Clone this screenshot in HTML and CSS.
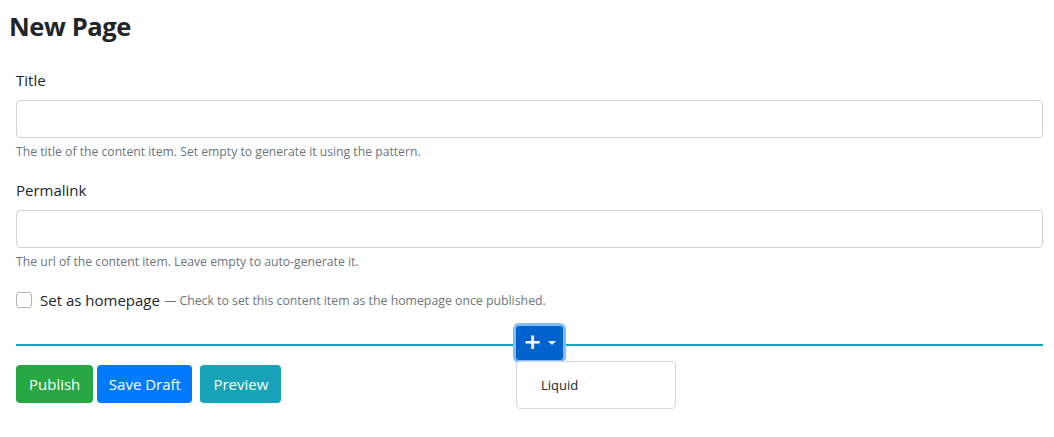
FILE: index.html
```html
<!DOCTYPE html>
<html>
<head>
<meta charset="utf-8">
<link rel="stylesheet" href="styles.css">
</head>
<body>
<h1 class="page-title">New Page</h1>
<form class="editor">
  <div class="field">
    <label class="field-label">Title</label>
    <input class="text-input" type="text">
    <div class="hint">The title of the content item. Set empty to generate it using the pattern.</div>
  </div>
  <div class="field">
    <label class="field-label">Permalink</label>
    <input class="text-input" type="text">
    <div class="hint">The url of the content item. Leave empty to auto-generate it.</div>
  </div>
  <div class="check-row">
    <span class="check-box"></span>
    <span class="check-label">Set as homepage</span>
    <span class="check-hint">— Check to set this content item as the homepage once published.</span>
  </div>
  <div class="divider">
    <div class="add-wrap">
      <button type="button" class="add-btn"><span class="plus">+</span><span class="caret"></span></button>
      <div class="menu"><div class="menu-item">Liquid</div></div>
    </div>
  </div>
  <div class="actions">
    <button type="button" class="btn btn-green">Publish</button>
    <button type="button" class="btn btn-blue">Save Draft</button>
    <button type="button" class="btn btn-teal">Preview</button>
  </div>
</form>
</body>
</html>
```
FILE: styles.css
```css
* { box-sizing: border-box; }
html, body { min-height: 100%; }
body {
  margin: 0;
  padding: 0 11px 34px 9px;
  font-family: "Open Sans", "Noto Sans", sans-serif;
  color: #212529;
  background: #fff;
}
.page-title {
  margin: 0;
  padding-top: 8px;
  font-size: 25.5px;
  font-weight: 700;
  line-height: 36px;
  letter-spacing: -0.4px;
}
.editor {
  padding: 24px 0 0 7px;
}
.field {
  display: flex;
  flex-direction: column;
  margin-bottom: 17px;
}
.field-label {
  font-size: 15px;
  line-height: 24px;
  margin-bottom: 8px;
}
.text-input {
  height: 38px;
  width: 100%;
  border: 1px solid #ced4da;
  border-radius: 4px;
  margin: 0;
}
.hint {
  margin-top: 4px;
  font-size: 12.2px;
  line-height: 19px;
  color: #6c757d;
}
.check-row {
  display: flex;
  align-items: center;
  height: 24px;
}
.check-box {
  width: 16px;
  height: 16px;
  border: 1px solid #adb5bd;
  border-radius: 3px;
  margin-right: 8px;
}
.check-label {
  font-size: 15px;
  margin-right: 4px;
}
.check-hint {
  font-size: 12.3px;
  color: #6c757d;
}
.divider {
  margin-top: 32px;
  height: 2px;
  background: #17a2b8;
  position: relative;
}
.add-wrap {
  position: absolute;
  left: 500px;
  top: -18px;
  z-index: 2;
}
.add-btn {
  width: 47px;
  height: 34px;
  border: none;
  border-radius: 3px;
  background: #0062cc;
  color: #fff;
  box-shadow: 0 0 0 3px #80bdff;
  display: flex;
  align-items: center;
  justify-content: center;
  gap: 6px;
  padding: 0 0 2px;
}
.plus {
  font-size: 22px;
  font-weight: 700;
  line-height: 1;
  font-family: "DejaVu Sans", sans-serif;
}
.caret {
  width: 0;
  height: 0;
  border-left: 4px solid transparent;
  border-right: 4px solid transparent;
  border-top: 4px solid #fff;
  margin-top: 2px;
}
.menu {
  margin-top: 1px;
  width: 160px;
  border: 1px solid #d8d8d8;
  border-radius: 4px;
  background: #fff;
  padding: 8px 0;
}
.menu-item {
  padding: 0 24px;
  font-size: 13px;
  line-height: 30px;
  color: #212529;
}
.actions {
  display: flex;
  gap: 4px;
  margin-top: 19px;
}
.btn {
  height: 38px;
  border: none;
  border-radius: 4px;
  color: #fff;
  font-family: inherit;
  font-size: 15px;
  padding: 0 13px;
}
.btn-green { background: #28a745; }
.btn-blue { background: #007bff; padding: 0 11.5px; }
.btn-teal { background: #17a2b8; margin-left: 4px; }
```
